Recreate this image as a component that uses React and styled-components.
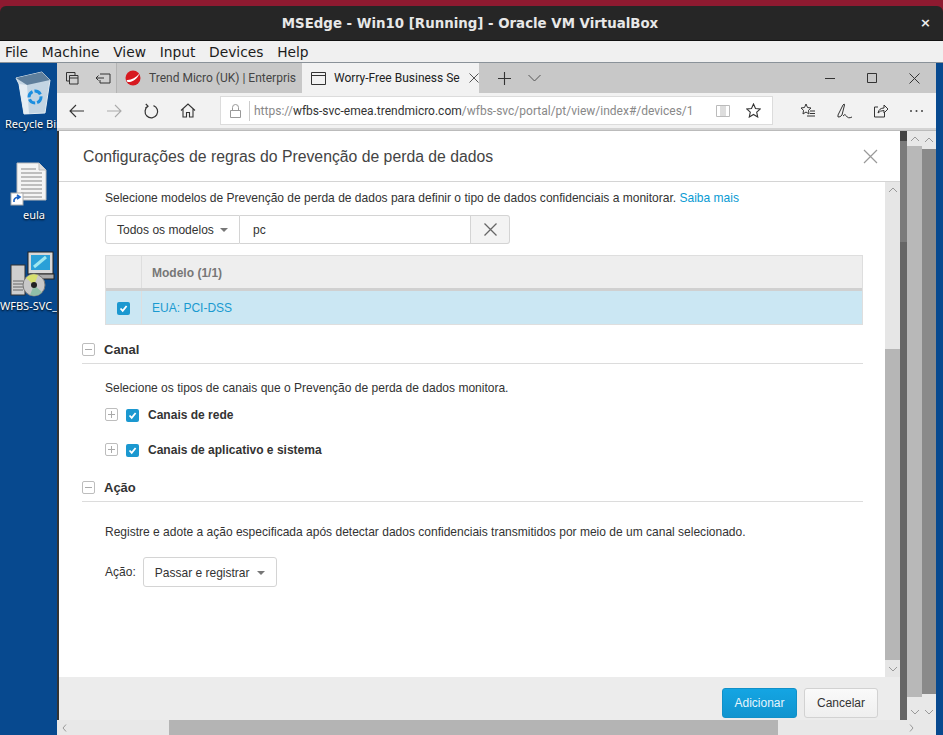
import React from 'react';
import styled, { createGlobalStyle } from 'styled-components';

const GlobalStyle = createGlobalStyle`
html, body { margin:0; padding:0; width:943px; height:735px; overflow:hidden; }
#root { width:943px; height:735px; }
* { box-sizing:border-box; }
`;

const Screen = styled.div`
width:943px;
height:735px;
display:flex;
flex-direction:column;
background:#8e1a30;
padding-top:6px;
overflow:hidden;
`;

const TitleBar = styled.div`
height:35px;
flex:none;
background:#262626;
border-radius:6px 6px 0 0;
color:#e8e8e8;
font:bold 13.35px "DejaVu Sans", sans-serif;
display:flex;
align-items:center;
justify-content:center;
position:relative;
padding-right:3px;
border-bottom:1px solid #111;
`;

const CloseMark = styled.span`
position:absolute;
right:12px;
top:9px;
font:bold 13px "DejaVu Sans", sans-serif;
color:#eee;
`;

const MenuBar = styled.div`
height:22px;
flex:none;
background:#f0f0f0;
border-bottom:1px solid #8a9299;
display:flex;
align-items:center;
gap:13.7px;
padding-left:5px;
font:13.8px "DejaVu Sans", sans-serif;
color:#1c1c1c;
`;

const Workspace = styled.div`
flex:1;
display:flex;
min-height:0;
background:#07498f;
`;

const Desktop = styled.div`
width:57px;
flex:none;
display:flex;
flex-direction:column;
overflow:hidden;
padding-top:8px;
`;

const DesktopItem = styled.div`
width:57px;
height:${(p) => p.$h}px;
flex:none;
display:flex;
flex-direction:column;
align-items:flex-start;
`;

const DesktopIcon = styled.div`
margin-left:${(p) => p.$left}px;
display:flex;
`;

const DesktopLabel = styled.span`
font:11px "Noto Sans", sans-serif;
color:#fff;
white-space:nowrap;
text-shadow:0 1px 2px #000;
margin:1px 0 0 ${(p) => p.$left || 0}px;
`;

const Browser = styled.div`
flex:1;
min-width:0;
display:flex;
flex-direction:column;
`;

const TabStrip = styled.div`
height:30px;
flex:none;
background:#c8c8c8;
display:flex;
align-items:stretch;
font:12px Roboto, sans-serif;
color:#333;
`;

const TabTools = styled.div`
width:60px;
flex:none;
display:flex;
align-items:center;
gap:16px;
padding-left:8px;
border-right:1px solid #b4b4b4;
background:#cfcfcf;
`;

const Tab = styled.div`
width:${(p) => p.$w}px;
flex:none;
display:flex;
align-items:center;
gap:8px;
padding-left:${(p) => p.$pad}px;
background:${(p) => (p.$active ? '#f2f2f2' : '#c8c8c8')};
white-space:nowrap;
overflow:hidden;
position:relative;
color:${(p) => (p.$active ? '#222' : '#444')};
`;

const TabText = styled.span`
width:${(p) => p.$w}px;
flex:none;
`;

const TabActions = styled.div`
display:flex;
align-items:center;
gap:17px;
padding-left:19px;
flex:1;
`;

const WindowButtons = styled.div`
display:flex;
align-items:center;
gap:32px;
padding-right:16px;
margin-left:auto;
`;

const Toolbar = styled.div`
height:37px;
flex:none;
background:#f2f2f2;
border-bottom:2px solid #d4d4d4;
display:flex;
align-items:center;
padding-left:12px;
`;

const NavButtons = styled.div`
width:151px;
flex:none;
display:flex;
align-items:center;
gap:21px;
`;

const AddressBar = styled.div`
width:553px;
height:29px;
flex:none;
background:#fff;
border:1px solid #dcdcdc;
display:flex;
align-items:center;
padding-left:9px;
font:12px Roboto, sans-serif;
color:#888;
white-space:nowrap;
`;

const LockCell = styled.div`
width:20px;
height:20px;
flex:none;
border-right:1px solid #ccc;
display:flex;
align-items:center;
margin-right:4px;
`;

const Domain = styled.span`
color:#333;
`;

const AddressTail = styled.div`
margin-left:auto;
display:flex;
align-items:center;
gap:16px;
padding-right:11px;
`;

const ToolIcons = styled.div`
flex:1;
display:flex;
align-items:center;
gap:20px;
padding-left:27px;
`;

const Page = styled.div`
flex:1;
min-height:0;
display:flex;
flex-direction:column;
background:#555;
border-top:1px solid #bbb;
`;

const PageMain = styled.div`
flex:1;
min-height:0;
display:flex;
`;

const Edge = styled.div`
width:2px;
flex:none;
background:#333;
`;

const Modal = styled.div`
width:841px;
flex:none;
display:flex;
flex-direction:column;
background:#fff;
`;

const ModalHeader = styled.div`
height:51px;
flex:none;
display:flex;
align-items:center;
justify-content:space-between;
padding:1px 22px 0 24px;
border-bottom:1px solid #d4d4d4;
font:15.77px "Liberation Sans", sans-serif;
color:#444;
`;

const ModalMiddle = styled.div`
flex:1;
min-height:0;
display:flex;
`;

const ModalBody = styled.div`
flex:1;
min-width:0;
padding:0 22px 0 23px;
font:12.02px "Liberation Sans", sans-serif;
color:#333;
`;

const Indented = styled.div`
padding-left:23px;
`;

const Intro = styled.p`
margin:${(p) => p.$top}px 0 0;
line-height:16px;
height:16px;
`;

const LearnMore = styled.a`
color:#0a9bd3;
`;

const SearchRow = styled.div`
display:flex;
height:29px;
margin-top:9px;
`;

const SelectBox = styled.div`
width:${(p) => p.$w}px;
height:${(p) => p.$h}px;
flex:none;
display:flex;
align-items:center;
justify-content:space-between;
padding:1px 11px 0;
background:#fff;
border:1px solid #d4d4d4;
border-radius:${(p) => (p.$joined ? '3px 0 0 3px' : '3px')};
color:#333;
`;

const Caret = styled.span`
width:0;
height:0;
border-left:4px solid transparent;
border-right:4px solid transparent;
border-top:4px solid #777;
`;

const SearchInput = styled.div`
width:231px;
flex:none;
border:1px solid #d4d4d4;
border-left:none;
display:flex;
align-items:center;
padding-left:13px;
color:#333;
`;

const ClearButton = styled.div`
width:39px;
flex:none;
border:1px solid #d4d4d4;
border-left:none;
border-radius:0 3px 3px 0;
background:#f3f3f3;
display:flex;
align-items:center;
justify-content:center;
`;

const Table = styled.div`
margin-top:11px;
border:1px solid #dedede;
border-bottom:none;
`;

const HeadRow = styled.div`
display:grid;
grid-template-columns:35px 1fr;
height:35px;
background:#eeeeee;
border-bottom:3px solid #d0d0d0;
font-weight:bold;
color:#777;
`;

const BodyRow = styled.div`
display:grid;
grid-template-columns:35px 1fr;
height:34px;
background:#cbe7f3;
border-bottom:1px solid #dedede;
color:#1a9ad0;
`;

const Cell = styled.div`
display:flex;
align-items:center;
justify-content:${(p) => (p.$center ? 'center' : 'flex-start')};
padding:1px 0 0 ${(p) => (p.$center ? 0 : 10)}px;
border-left:${(p) => (p.$center ? 'none' : '1px solid #dedede')};
`;

const Check = styled.span`
width:13px;
height:13px;
flex:none;
background:#1b98d0;
border-radius:2px;
display:inline-flex;
align-items:center;
justify-content:center;
`;

const Section = styled.div`
display:flex;
align-items:flex-end;
gap:9px;
height:${(p) => p.$h}px;
padding-bottom:6px;
border-bottom:1px solid #dcdcdc;
font:bold 13px/15px "Liberation Sans", sans-serif;
color:#333;
`;

const Toggle = styled.span`
width:13px;
height:13px;
flex:none;
margin-bottom:${(p) => (p.$plus ? 2 : 1)}px;
border:1px solid #bdbdbd;
border-radius:2px;
position:relative;
background:#fff;
&::before {
  content:'';
  position:absolute;
  left:2px;
  right:2px;
  top:5px;
  height:1px;
  background:#aaa;
}
&::after {
  content:'';
  display:${(p) => (p.$plus ? 'block' : 'none')};
  position:absolute;
  top:2px;
  bottom:2px;
  left:5px;
  width:1px;
  background:#aaa;
}
`;

const ChannelRow = styled.div`
display:flex;
align-items:center;
height:16px;
margin-top:${(p) => p.$top}px;
font-weight:bold;
color:#333;
`;

const ChannelChecks = styled.div`
display:flex;
align-items:center;
gap:8px;
width:43px;
flex:none;
`;

const ActionRow = styled.div`
display:flex;
align-items:center;
gap:7px;
margin-top:17px;
`;

const ModalScroll = styled.div`
width:15px;
flex:none;
background:#e6e6e6;
display:flex;
flex-direction:column;
`;

const Arrow = styled.div`
height:${(p) => p.$h}px;
flex:none;
padding-top:${(p) => p.$pt || 0}px;
display:flex;
align-items:center;
justify-content:center;
`;

const ScrollThumb = styled.div`
background:${(p) => p.$color};
height:${(p) => p.$h}px;
margin-top:${(p) => p.$top || 0}px;
flex:none;
`;

const Gap = styled.div`
flex:1;
`;

const ModalFooter = styled.div`
height:43px;
flex:none;
background:#ececec;
display:flex;
justify-content:flex-end;
align-items:flex-start;
gap:7px;
padding:11px 22px 0 0;
font:12px "Liberation Sans", sans-serif;
`;

const FooterButton = styled.div`
width:${(p) => p.$w}px;
height:30px;
display:flex;
align-items:center;
justify-content:center;
border-radius:3px;
color:${(p) => (p.$primary ? '#e6f5fc' : '#333')};
background:${(p) => (p.$primary ? 'linear-gradient(#14a5e3,#1094cf)' : 'linear-gradient(#fafafa,#efefef)')};
border:1px solid ${(p) => (p.$primary ? '#1090c8' : '#d2d2d2')};
`;

const DimStrip = styled.div`
width:7px;
flex:none;
background:#666;
display:flex;
flex-direction:column;
`;

const DimPart = styled.div`
height:${(p) => p.$h}px;
background:${(p) => p.$color};
flex:none;
`;

const OuterScroll = styled.div`
width:${(p) => p.$w}px;
flex:none;
background:#e8e8e8;
display:flex;
flex-direction:column;
`;

const HScroll = styled.div`
height:15px;
flex:none;
background:#e8e8e8;
display:flex;
align-items:center;
padding-right:14px;
`;

const HThumb = styled.div`
width:609px;
height:15px;
margin-left:96px;
flex:none;
background:#b4b4b4;
`;

const BlueEdge = styled.div`
width:7px;
flex:none;
background:#07498f;
`;

const Line = ({ w = 16, h = 16, sw = 1.2, color = '#333', children }) => (
  <svg width={w} height={h} viewBox={`0 0 ${w} ${h}`} fill="none" stroke={color} strokeWidth={sw} style={{ flex: 'none' }}>
    {children}
  </svg>
);

const Chevron = ({ up }) => (
  <Line w={10} h={6} color="#999" sw={1}>
    {up ? <path d="M1 5 5 1 9 5" /> : <path d="M1 1 5 5 9 1" />}
  </Line>
);

const CheckMark = () => (
  <Check>
    <svg width="9" height="9" viewBox="0 0 9 9" fill="none" stroke="#fff" strokeWidth="1.8">
      <path d="M1.5 4.5 3.7 6.8 7.6 2" />
    </svg>
  </Check>
);

const RecycleBin = () => (
  <svg width="36" height="44" viewBox="0 0 36 44">
    <path d="M1 7 27 1 35 9 30 42 9 43 4 13Z" fill="#c3d5e3" stroke="#e3ecf2" />
    <path d="M1 7 27 1 35 9 12 14Z" fill="#5f7f9c" />
    <path d="M4 13 12 14 14 43 9 43Z" fill="#e5edf3" />
    <circle cx="20" cy="26" r="6" fill="none" stroke="#1c8fe0" strokeWidth="3" strokeDasharray="7 2" />
  </svg>
);

const EulaIcon = () => (
  <svg width="38" height="44" viewBox="0 0 38 44">
    <path d="M7 1H29L36 8V38H7Z" fill="#f4f4f4" stroke="#bbb" />
    <path d="M29 1V8H36" fill="#ddd" stroke="#bbb" />
    <path d="M11 7H26M11 11H32M11 15H32M11 19H32M11 23H32M11 27H32M11 31H32M11 35H32" stroke="#888" />
    <rect x="1" y="31" width="12" height="12" fill="#fff" stroke="#aaa" />
    <path d="M4 40 4 38Q5 35 9 35M7 33 10 35 7 37" stroke="#1a62c4" strokeWidth="1.6" fill="none" />
  </svg>
);

const InstallerIcon = () => (
  <svg width="46" height="46" viewBox="0 0 46 46">
    <rect x="1" y="14" width="14" height="30" fill="#cfcfcf" stroke="#333" />
    <path d="M3 30H13M3 33H13M3 36H13M3 39H13" stroke="#666" />
    <rect x="18" y="1" width="25" height="22" fill="#d8d8d8" stroke="#222" />
    <rect x="21" y="4" width="19" height="15" fill="#2aa0d8" />
    <path d="M24 16 36 6" stroke="#9fe8f0" strokeWidth="3" />
    <rect x="20" y="23" width="24" height="5" fill="#aaa" stroke="#222" />
    <circle cx="24" cy="34" r="11" fill="#c8c8c8" stroke="#777" />
    <path d="M24 34 16 27A11 11 0 0 1 28 24Z" fill="#d7e070" />
    <path d="M24 34 32 41A11 11 0 0 1 20 44Z" fill="#8fc0a8" />
    <circle cx="24" cy="34" r="3" fill="#222" />
  </svg>
);

const TrendLogo = () => (
  <svg width="16" height="16" viewBox="0 0 16 16" style={{ flex: 'none' }}>
    <circle cx="8" cy="8" r="7.5" fill="#d71920" />
    <path d="M1.5 10C6 10.5 10.5 8 14.5 3.5 12.5 9 7 12.5 2.5 12Z" fill="#fff" />
  </svg>
);

const App = () => (
  <Screen>
    <GlobalStyle />
    <TitleBar>
      MSEdge - Win10 [Running] - Oracle VM VirtualBox
      <CloseMark>×</CloseMark>
    </TitleBar>
    <MenuBar>
      <span>File</span>
      <span>Machine</span>
      <span>View</span>
      <span>Input</span>
      <span>Devices</span>
      <span>Help</span>
    </MenuBar>
    <Workspace>
      <Desktop>
        <DesktopItem $h={91}>
          <DesktopIcon $left={15}><RecycleBin /></DesktopIcon>
          <DesktopLabel $left={5}>Recycle Bin</DesktopLabel>
        </DesktopItem>
        <DesktopItem $h={89}>
          <DesktopIcon $left={10}><EulaIcon /></DesktopIcon>
          <DesktopLabel $left={23}>eula</DesktopLabel>
        </DesktopItem>
        <DesktopItem $h={70}>
          <DesktopIcon $left={10}><InstallerIcon /></DesktopIcon>
          <DesktopLabel>WFBS-SVC_</DesktopLabel>
        </DesktopItem>
      </Desktop>
      <Browser>
        <TabStrip>
          <TabTools>
            <Line w={14} h={14} sw={1}>
              <path d="M1.5 1.5H10V4M1.5 1.5V10H4M4.5 4.5H13V13H4.5ZM4.5 7H13" />
            </Line>
            <Line w={16} h={14} sw={1}>
              <path d="M5 3H15V12H5V9M1 7H9M3.5 4.5 1 7 3.5 9.5" />
            </Line>
          </TabTools>
          <Tab $w={185} $pad={8}>
            <TrendLogo />
            <TabText $w={145}>Trend Micro (UK) | Enterpris</TabText>
          </Tab>
          <Tab $w={177} $pad={9} $active>
            <Line w={15} h={13} sw={1}>
              <path d="M.5 .5H14.5V12.5H.5ZM.5 3.5H14.5" />
            </Line>
            <TabText $w={126}>Worry-Free Business Se</TabText>
            <Line w={12} h={12} sw={1} color="#555">
              <path d="M1.5 1.5 10.5 10.5M10.5 1.5 1.5 10.5" />
            </Line>
          </Tab>
          <TabActions>
            <Line w={13} h={13} sw={1.1}>
              <path d="M6.5 0V13M0 6.5H13" />
            </Line>
            <Line w={13} h={8} sw={1} color="#555">
              <path d="M.5 1 6.5 7 12.5 1" />
            </Line>
            <WindowButtons>
              <Line w={10} h={3} sw={1}>
                <path d="M0 1.5H10" />
              </Line>
              <Line w={10} h={10} sw={1}>
                <path d="M.5 .5H9.5V9.5H.5Z" />
              </Line>
              <Line w={11} h={11} sw={1}>
                <path d="M.5 .5 10.5 10.5M10.5 .5 .5 10.5" />
              </Line>
            </WindowButtons>
          </TabActions>
        </TabStrip>
        <Toolbar>
          <NavButtons>
            <Line w={16} h={14} sw={1.1}>
              <path d="M1 7H15M7 1 1 7 7 13" />
            </Line>
            <Line w={16} h={14} sw={1.1} color="#aaa">
              <path d="M1 7H15M9 1 15 7 9 13" />
            </Line>
            <Line w={16} h={16} sw={1.2}>
              <path d="M5 3.2A6.3 6.3 0 1 0 10.5 2.6M2.8 1 5 3.2 2.4 5" />
            </Line>
            <Line w={16} h={15} sw={1.1}>
              <path d="M1 7.5 8 1 15 7.5M3 6V14H6.5V9.5H9.5V14H13V6" />
            </Line>
          </NavButtons>
          <AddressBar>
            <LockCell>
              <Line w={11} h={14} sw={1} color="#999">
                <path d="M.5 6.5H10.5V13.5H.5ZM2.5 6.5V3.5A3 3 0 0 1 8.5 3.5V6.5" />
              </Line>
            </LockCell>
            <span>https://<Domain>wfbs-svc-emea.trendmicro.com</Domain>/wfbs-svc/portal/pt/view/index#/devices/1</span>
            <AddressTail>
              <Line w={14} h={12} sw={1} color="#bbb">
                <path d="M.5 .5H13.5V11.5H.5ZM7 .5V11.5M5 .5V11.5M9 .5V11.5" />
              </Line>
              <Line w={15} h={15} sw={1.1}>
                <path d="M7.5 1 9.5 5.5 14.3 6 10.7 9.2 11.7 14 7.5 11.5 3.3 14 4.3 9.2 .7 6 5.5 5.5Z" />
              </Line>
            </AddressTail>
          </AddressBar>
          <ToolIcons>
            <Line w={16} h={15} sw={1}>
              <path d="M6 1 7.5 4.5 11 5 8.5 7.3 9 11 6 9 3 11 3.5 7.3 1 5 4.5 4.5ZM10 8H15M10 10.5H15M7 13H15" />
            </Line>
            <Line w={17} h={16} sw={1}>
              <path d="M2 12 7 2Q8.5 0 8.5 2L6 12Q4 14.5 2 14ZM7 13Q9 10 10.5 13T16 14" />
            </Line>
            <Line w={16} h={15} sw={1}>
              <path d="M5 4H1.5V14H11.5V10M5 10Q6 5 11 5V2L15 6 11 10V7.5Q7 7.5 5 10Z" />
            </Line>
            <Line w={15} h={4} sw={0} color="none">
              <circle cx="2" cy="2" r="1" fill="#444" />
              <circle cx="7.5" cy="2" r="1" fill="#444" />
              <circle cx="13" cy="2" r="1" fill="#444" />
            </Line>
          </ToolIcons>
        </Toolbar>
        <Page>
          <PageMain>
            <Edge />
            <Modal>
              <ModalHeader>
                Configurações de regras do Prevenção de perda de dados
                <Line w={15} h={15} sw={1.2} color="#999">
                  <path d="M1 1 14 14M14 1 1 14" />
                </Line>
              </ModalHeader>
              <ModalMiddle>
                <ModalBody>
                  <Indented>
                    <Intro $top={8}>
                      Selecione modelos de Prevenção de perda de dados para definir o tipo de dados confidenciais a monitorar. <LearnMore>Saiba mais</LearnMore>
                    </Intro>
                    <SearchRow>
                      <SelectBox $w={135} $h={29} $joined>
                        Todos os modelos
                        <Caret />
                      </SelectBox>
                      <SearchInput>pc</SearchInput>
                      <ClearButton>
                        <Line w={13} h={13} sw={1.3} color="#666">
                          <path d="M.5 .5 12.5 12.5M12.5 .5 .5 12.5" />
                        </Line>
                      </ClearButton>
                    </SearchRow>
                    <Table>
                      <HeadRow>
                        <Cell $center />
                        <Cell>Modelo (1/1)</Cell>
                      </HeadRow>
                      <BodyRow>
                        <Cell $center><CheckMark /></Cell>
                        <Cell>EUA: PCI-DSS</Cell>
                      </BodyRow>
                    </Table>
                  </Indented>
                  <Section $h={39}>
                    <Toggle />
                    Canal
                  </Section>
                  <Indented>
                    <Intro $top={16}>Selecione os tipos de canais que o Prevenção de perda de dados monitora.</Intro>
                    <ChannelRow $top={11}>
                      <ChannelChecks>
                        <Toggle $plus />
                        <CheckMark />
                      </ChannelChecks>
                      Canais de rede
                    </ChannelRow>
                    <ChannelRow $top={19}>
                      <ChannelChecks>
                        <Toggle $plus />
                        <CheckMark />
                      </ChannelChecks>
                      Canais de aplicativo e sistema
                    </ChannelRow>
                  </Indented>
                  <Section $h={44}>
                    <Toggle />
                    Ação
                  </Section>
                  <Indented>
                    <Intro $top={22}>Registre e adote a ação especificada após detectar dados confidenciais transmitidos por meio de um canal selecionado.</Intro>
                    <ActionRow>
                      Ação:
                      <SelectBox $w={134} $h={30}>
                        Passar e registrar
                        <Caret />
                      </SelectBox>
                    </ActionRow>
                  </Indented>
                </ModalBody>
                <ModalScroll>
                  <Arrow $h={15}><Chevron up /></Arrow>
                  <ScrollThumb $color="#b6b6b6" $h={311} $top={152} />
                  <Gap />
                  <Arrow $h={17}><Chevron /></Arrow>
                </ModalScroll>
              </ModalMiddle>
              <ModalFooter>
                <FooterButton $w={75} $primary>Adicionar</FooterButton>
                <FooterButton $w={74}>Cancelar</FooterButton>
              </ModalFooter>
            </Modal>
            <DimStrip>
              <DimPart $h={10} $color="#444" />
              <DimPart $h={101} $color="#7b7b7b" />
              <DimPart $h={479} $color="#666" />
            </DimStrip>
            <OuterScroll $w={15}>
              <Arrow $h={15}><Chevron up /></Arrow>
              <ScrollThumb $color="#b8b8b8" $h={551} />
              <Gap />
              <Arrow $h={23} $pt={7}><Chevron /></Arrow>
            </OuterScroll>
            <OuterScroll $w={14}>
              <Arrow $h={18}><Chevron up /></Arrow>
              <ScrollThumb $color="#8a8a8a" $h={545} />
              <Gap />
              <Arrow $h={23} $pt={7}><Chevron /></Arrow>
            </OuterScroll>
          </PageMain>
          <HScroll>
            <Line w={16} h={8} sw={1} color="#999">
              <path d="M9 .5 6 4 9 7.5" />
            </Line>
            <HThumb />
            <Gap />
            <Line w={16} h={8} sw={1} color="#999">
              <path d="M4 .5 7 4 4 7.5" />
            </Line>
          </HScroll>
        </Page>
      </Browser>
      <BlueEdge />
    </Workspace>
  </Screen>
);

export default App;
